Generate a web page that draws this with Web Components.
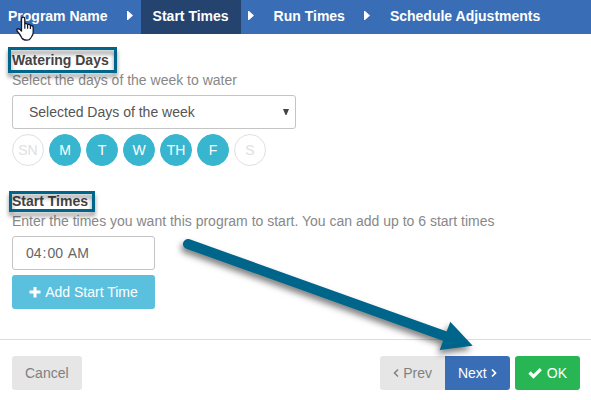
<!DOCTYPE html>
<html lang="en-US">
<head>
<meta charset="utf-8">
<title>Program – Start Times</title>
<style>
  body { margin: 0; background: #fff; color: #888; font: 14px/20px "Liberation Sans", Arial, sans-serif; }
</style>
</head>
<body>
<program-wizard></program-wizard>

<script>
const define = (name, html) => customElements.define(name, class extends HTMLElement {
  constructor() {
    super();
    this.attachShadow({ mode: 'open' }).innerHTML = html;
  }
});

define('step-arrow', `
  <style>
    :host { display: flex; width: 21px; align-items: center; justify-content: center; flex: none; }
    svg { display: block; padding-bottom: 3px; }
  </style>
  <svg width="6" height="9" aria-hidden="true"><path d="M0 0H1L6 4.5 1 9H0Z" fill="#fff"/></svg>`);

define('step-link', `
  <style>
    :host { display: block; flex: none; }
    a { display: block; padding: 6px 12px 8px; color: #fff; font-weight: bold; text-decoration: none; }
    :host([active]) a { background: #24446f; }
    :host([first]) a { padding-left: 8px; }
  </style>
  <a href="#"><slot></slot></a>`);

define('step-bar', `
  <style>
    :host { display: block; }
    nav { display: flex; background: #396eb6; overflow: hidden; }
  </style>
  <nav aria-label="Steps"><slot></slot></nav>`);

define('marked-heading', `
  <style>
    :host { display: block; }
    h2 { margin: 0; font: inherit; font-weight: bold; color: #444; display: inline-block; position: relative; vertical-align: top; }
    i { position: absolute; inset: var(--mark-inset); border: 3px solid #00658a; filter: drop-shadow(0 4px 2px rgba(0,0,0,.45)); }
  </style>
  <h2><slot></slot><i></i></h2>`);

customElements.define('day-toggle', class extends HTMLElement {
  constructor() {
    super();
    this.attachShadow({ mode: 'open' }).innerHTML = `
      <style>
        :host { display: block; }
        button { box-sizing: border-box; width: 32px; height: 32px; padding: 0; border-radius: 50%;
                 border: 1px solid #e0e0e0; background: #fff; color: #e0e0e0; font: inherit; }
        button[aria-pressed="true"] { background: #38b6cf; border-color: #38b6cf; color: #fff; }
      </style>
      <button type="button"><slot></slot></button>`;
    const b = this.shadowRoot.querySelector('button');
    b.setAttribute('aria-pressed', this.hasAttribute('on'));
    b.onclick = () => b.setAttribute('aria-pressed', b.getAttribute('aria-pressed') !== 'true');
  }
});

define('day-select', `
  <style>
    :host { display: block; width: 284px; max-width: 100%; position: relative; }
    select { appearance: none; box-sizing: border-box; display: block; width: 100%; height: 34px; padding: 0 16px;
             border: 1px solid #c4c4c4; border-radius: 3px; background: #fff; color: #555; font: inherit; }
    svg { position: absolute; right: 7px; top: 14px; pointer-events: none; }
  </style>
  <select aria-label="Watering days mode"><option>Selected Days of the week</option><option>Odd days</option><option>Even days</option></select>
  <svg width="6" height="6" aria-hidden="true"><path d="M0 0H6L3.500 6H2.500Z" fill="#444"/></svg>`);

define('time-field', `
  <style>
    :host { display: block; }
    input { box-sizing: border-box; display: block; width: 100%; height: 34px; padding: 0 12px;
            border: 1px solid #c4c4c4; border-radius: 3px; background: #fff; color: #666; font: inherit; }
    input::-webkit-calendar-picker-indicator { display: none; }
  </style>
  <input type="time" value="04:00" aria-label="Start time">`);

define('action-button', `
  <style>
    :host { display: block; }
    button { display: flex; align-items: center; justify-content: center; gap: 4px; width: 100%; height: 34px;
             padding: 0 13px; border: 0; border-radius: var(--corners, 3px); font: inherit; white-space: nowrap;
             background: #e6e6e6; color: #808080; }
    :host([kind="info"]) button { background: #5bc0de; color: #fff; }
    :host([kind="primary"]) button { background: #396eb6; color: #fff; }
    :host([kind="success"]) button { background: #27b653; color: #fff; }
    ::slotted(svg) { display: block; flex: none; }
  </style>
  <button type="button"><slot></slot></button>`);

define('hand-cursor', `
  <style>:host { position: absolute; left: 16px; top: 16px; pointer-events: none; } svg { display: block; }</style>
  <svg width="19" height="25" viewBox="0 0 19 25" aria-hidden="true">
    <path d="M5.500 15V3C5.500 .6 8.800 .6 8.800 3V7.800C9.800 7.200 11.300 7.500 11.600 8.600 12.700 8 14.100 8.500 14.400 9.600 15.800 9.200 17.200 10 17.200 11.500V16.500C17.200 19 15.600 20.300 14.800 22 14 23.600 12.400 24.200 10.800 24.200 8.400 24.200 6.800 23.500 5.800 21.800 4.800 20 4 18.500 2.700 17 1.800 16 .8 15 .7 13.900 1 12.200 3.300 12.200 5.500 15Z" fill="#fff" stroke="#14182b" stroke-width="1.300" stroke-linejoin="round"/>
    <path d="M8.800 7.800V12.800M11.600 8.600V12.800M14.400 9.600V13" fill="none" stroke="#14182b" stroke-width="1.200"/>
  </svg>`);

define('pointer-arrow', `
  <style>:host { position: absolute; left: 176px; top: 232px; pointer-events: none; } svg { display: block; overflow: visible; }</style>
  <svg width="304" height="124" viewBox="176 232 304 124" aria-hidden="true" style="filter:drop-shadow(-2px 4px 3px rgba(0,0,0,.5))">
    <path d="M188 244L446 336.500" stroke="#00658a" stroke-width="10" stroke-linecap="round"/>
    <path d="M450.300 321.700L472.700 345.700 439.700 350Z" fill="#00658a"/>
  </svg>`);

define('program-wizard', `
  <style>
    :host { display: block; position: relative; }
    main { padding: 16px 12px 30px; }
    section + section { margin-top: 25px; }
    p { margin: 0 0 5px; }
    .days { display: flex; gap: 5px; margin-top: 5px; }
    .times { display: grid; gap: 5px; width: 143px; }
    .first { --mark-inset: -3px -8px -3px -4px; }
    .second { --mark-inset: 0 -7px -1px -3px; }
    footer { display: flex; align-items: center; border-top: 1px solid #ddd; padding: 16px 11px 10px 12px; }
    .pager { display: flex; margin-left: auto; margin-right: 5px; }
    .prev { --corners: 3px 0 0 3px; }
    .next { --corners: 0 3px 3px 0; }
  </style>
  <step-bar>
    <step-link first>Program Name</step-link><step-arrow></step-arrow>
    <step-link active>Start Times</step-link><step-arrow></step-arrow>
    <step-link>Run Times</step-link><step-arrow></step-arrow>
    <step-link>Schedule Adjustments</step-link>
  </step-bar>
  <main>
    <section>
      <marked-heading class="first">Watering Days</marked-heading>
      <p>Select the days of the week to water</p>
      <day-select></day-select>
      <div class="days">
        <day-toggle>SN</day-toggle><day-toggle on>M</day-toggle><day-toggle on>T</day-toggle><day-toggle on>W</day-toggle><day-toggle on>TH</day-toggle><day-toggle on>F</day-toggle><day-toggle>S</day-toggle>
      </div>
    </section>
    <section>
      <marked-heading class="second">Start Times</marked-heading>
      <p>Enter the times you want this program to start. You can add up to 6 start times</p>
      <div class="times">
        <time-field></time-field>
        <action-button kind="info"><svg width="12" height="12" aria-hidden="true"><path d="M4.500 1H7.500V4.500H11.500V7.500H7.500V11.500H4.500V7.500H.5V4.500H4.500Z" fill="#fff"/></svg>Add Start Time</action-button>
      </div>
    </section>
  </main>
  <footer>
    <action-button>Cancel</action-button>
    <div class="pager">
      <action-button class="prev"><svg width="6" height="10" aria-hidden="true"><path d="M5 1.500L1.500 5 5 8.500" fill="none" stroke="#808080" stroke-width="1.500"/></svg>Prev</action-button>
      <action-button class="next" kind="primary">Next<svg width="6" height="10" aria-hidden="true"><path d="M1 1.500L4.500 5 1 8.500" fill="none" stroke="#fff" stroke-width="1.700"/></svg></action-button>
    </div>
    <action-button kind="success"><svg width="15" height="12" aria-hidden="true"><path d="M1.500 5.500L5.500 9.500 12.800 2.200" fill="none" stroke="#fff" stroke-width="3.200"/></svg>OK</action-button>
  </footer>
  <pointer-arrow></pointer-arrow>
  <hand-cursor></hand-cursor>`);
</script>
</body>
</html>
